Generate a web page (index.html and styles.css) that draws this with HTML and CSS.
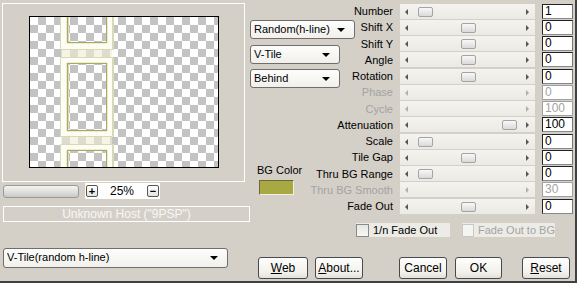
FILE: index.html
```html
<!DOCTYPE html>
<html lang="en">
<head>
    <meta charset="UTF-8">
    <title>V-Tile</title>
    <link rel="stylesheet" href="styles.css">
</head>
<body>
<div class="dialog">
    <!-- Preview side -->
    <div class="left">
        <div class="preview">
            <div class="canvas">
                <svg width="188" height="150" viewBox="0 0 188 150">
                    <g fill="#fdfdf3" fill-rule="evenodd" stroke="#d9d9b8">
                        <path d="M30.5 -10H82.5V32.5H30.5Z M37 -10H77V26H37Z"/>
                        <path d="M30.5 40.5H82.5V119.5H30.5Z M37 46H77V114H37Z"/>
                        <path d="M30.5 127.5H82.5V160H30.5Z M37 133H77V160H37Z"/>
                    </g>
                    <rect x="31" y="33" width="51" height="7" fill="#efefd6" opacity=".6"/>
                    <rect x="31" y="120" width="51" height="7" fill="#efefd6" opacity=".6"/>
                    <g fill="none" stroke="#a9a962">
                        <path d="M37.5 -10V25.5H76.5V-10"/>
                        <rect x="37.5" y="46.5" width="39" height="67"/>
                        <path d="M37.5 160V133.5H76.5V160"/>
                    </g>
                    <g fill="none" stroke="#dcdcb0">
                        <path d="M38.5 -10V24.5"/>
                        <path d="M38.5 47.5V112.5"/>
                        <path d="M38.5 134.5V160"/>
                        <path d="M83.5 -10V33 M83.5 40V120 M83.5 127V160"/>
                    </g>
                </svg>
            </div>
        </div>
        <div class="zoom-row">
            <div class="zoom-bar"></div>
            <div class="zoom-box">
                <span class="mini-btn">+</span>
                <span class="zoom-val">25%</span>
                <span class="mini-btn">&minus;</span>
            </div>
        </div>
        <div class="host">Unknown Host ("9PSP")</div>
        <div class="combo combo-filter">V-Tile(random h-line)<span class="caret"></span></div>
    </div>

    <!-- Settings side -->
    <div class="right">
        <div class="controls">
            <div class="mid">
                <div class="combo combo-mode">Random(h-line)<span class="caret"></span></div>
                <div class="combo combo-tile">V-Tile<span class="caret"></span></div>
                <div class="combo combo-order">Behind<span class="caret"></span></div>
                <div class="bg-label">BG Color</div>
                <div class="swatch"></div>
            </div>
            <div class="sliders">
                <span class="label">Number</span>
                <div class="track"><i class="arr-l"></i><b class="thumb pos-min"></b><i class="arr-r"></i></div>
                <span class="edit">1</span>

                <span class="label">Shift X</span>
                <div class="track"><i class="arr-l"></i><b class="thumb pos-mid"></b><i class="arr-r"></i></div>
                <span class="edit">0</span>

                <span class="label">Shift Y</span>
                <div class="track"><i class="arr-l"></i><b class="thumb pos-mid"></b><i class="arr-r"></i></div>
                <span class="edit">0</span>

                <span class="label">Angle</span>
                <div class="track"><i class="arr-l"></i><b class="thumb pos-mid"></b><i class="arr-r"></i></div>
                <span class="edit">0</span>

                <span class="label">Rotation</span>
                <div class="track"><i class="arr-l"></i><b class="thumb pos-mid"></b><i class="arr-r"></i></div>
                <span class="edit">0</span>

                <span class="label off">Phase</span>
                <div class="track off"><i class="arr-l"></i><i class="arr-r"></i></div>
                <span class="edit off">0</span>

                <span class="label off">Cycle</span>
                <div class="track off"><i class="arr-l"></i><i class="arr-r"></i></div>
                <span class="edit off">100</span>

                <span class="label">Attenuation</span>
                <div class="track"><i class="arr-l"></i><b class="thumb pos-max"></b><i class="arr-r"></i></div>
                <span class="edit">100</span>

                <span class="label">Scale</span>
                <div class="track"><i class="arr-l"></i><b class="thumb pos-min"></b><i class="arr-r"></i></div>
                <span class="edit">0</span>

                <span class="label">Tile Gap</span>
                <div class="track"><i class="arr-l"></i><b class="thumb pos-mid"></b><i class="arr-r"></i></div>
                <span class="edit">0</span>

                <span class="label">Thru BG Range</span>
                <div class="track"><i class="arr-l"></i><b class="thumb pos-min"></b><i class="arr-r"></i></div>
                <span class="edit">0</span>

                <span class="label off">Thru BG Smooth</span>
                <div class="track off"><i class="arr-l"></i><i class="arr-r"></i></div>
                <span class="edit off">30</span>

                <span class="label">Fade Out</span>
                <div class="track"><i class="arr-l"></i><b class="thumb pos-mid"></b><i class="arr-r"></i></div>
                <span class="edit">0</span>
            </div>
        </div>

        <div class="checks">
            <label class="check"><span class="box"></span>1/n Fade Out</label>
            <label class="check off"><span class="box"></span>Fade Out to BG</label>
        </div>

        <div class="buttons">
            <button class="btn btn-web"><u>W</u>eb</button>
            <button class="btn btn-about"><u>A</u>bout...</button>
            <button class="btn btn-cancel">Cancel</button>
            <button class="btn btn-ok">OK</button>
            <button class="btn btn-reset"><u>R</u>eset</button>
        </div>
    </div>
</div>
</body>
</html>
```

FILE: styles.css
```css
body {
    margin: 0;
    font-family: "Liberation Sans", Arial, sans-serif;
    font-size: 11px;
    color: #000;
    background-color: #d4d0c8;
}
.dialog {
    width: 577px;
    height: 283px;
    box-sizing: border-box;
    display: flex;
    background-color: #d4d0c8;
    border-right: 2px solid #404040;
    border-bottom: 2px solid #404040;
    overflow: hidden;
}

/* left side */
.left {
    width: 250px;
    flex-shrink: 0;
    display: flex;
    flex-direction: column;
}
.preview {
    margin: 3px 0 0 2px;
    width: 243px;
    height: 179px;
    box-sizing: border-box;
    border: 1px solid #fff;
    padding: 12px 0 0 26px;
}
.canvas {
    width: 188px;
    height: 150px;
    border: 1px solid #000;
    background-color: #fff;
    background-image: conic-gradient(#c3c3c3 25%, #fff 0 50%, #c3c3c3 0 75%, #fff 0);
    background-size: 16px 16px;
}
.canvas svg {
    display: block;
}
.zoom-row {
    display: flex;
    align-items: center;
    margin-top: 1px;
    height: 16px;
}
.zoom-bar {
    margin-left: 3px;
    width: 76px;
    height: 13px;
    box-sizing: border-box;
    border: 1px solid #9a9a9a;
    border-radius: 3px;
    background: linear-gradient(#f4f4f2, #dcdcd8 60%, #c8c8c4);
}
.zoom-box {
    margin-left: 6px;
    width: 75px;
    height: 16px;
    background-color: #fff;
    display: flex;
    align-items: center;
}
.mini-btn {
    width: 12px;
    height: 12px;
    box-sizing: border-box;
    margin-left: 1px;
    border: 1px solid #555;
    border-radius: 2px;
    background: linear-gradient(#fff, #e4e3de);
    font-size: 11px;
    font-weight: bold;
    line-height: 10px;
    text-align: center;
}
.zoom-val {
    width: 48px;
    text-align: center;
    font-size: 12px;
}
.host {
    margin: 7px 0 0 3px;
    width: 247px;
    height: 16px;
    box-sizing: border-box;
    border: 1px solid #fff;
    color: #f7f7f5;
    font-size: 12px;
    line-height: 14px;
    text-align: center;
}

/* combo boxes */
.combo {
    position: relative;
    height: 19px;
    box-sizing: border-box;
    border: 1px solid #6e6e6e;
    border-radius: 3px;
    background: linear-gradient(#fdfdfc, #f1f0eb);
    padding-left: 3px;
    line-height: 17px;
    font-size: 11px;
}
.caret {
    position: absolute;
    right: 9px;
    top: 7px;
    border-top: 4px solid #000;
    border-left: 4px solid transparent;
    border-right: 4px solid transparent;
}
.combo-filter {
    margin: 26px 0 0 3px;
    width: 225px;
    height: 20px;
}
.combo-mode {
    margin-top: 20px;
    width: 105px;
}
.combo-tile {
    margin-top: 6px;
    width: 90px;
}
.combo-order {
    margin-top: 5px;
    width: 90px;
}

/* right side */
.right {
    flex: 1;
    display: flex;
    flex-direction: column;
}
.controls {
    display: flex;
    height: 214px;
}
.mid {
    width: 105px;
    flex-shrink: 0;
    display: flex;
    flex-direction: column;
}
.bg-label {
    margin: 76px 0 0 7px;
    font-size: 11px;
    height: 14px;
}
.swatch {
    margin: 2px 0 0 9px;
    width: 35px;
    height: 15px;
    box-sizing: border-box;
    background-color: #a9a943;
    border: 1px solid;
    border-color: #6a6a3a #f0f0e0 #f0f0e0 #6a6a3a;
}
.sliders {
    padding-top: 3px;
    display: grid;
    grid-template-columns: 38px 135px 31px;
    grid-auto-rows: 16.25px;
    column-gap: 7px;
    align-items: center;
}
.label {
    justify-self: end;
    white-space: nowrap;
    font-size: 11px;
}
.label.off {
    color: #a3a3a3;
}
.track {
    position: relative;
    height: 15px;
    background: linear-gradient(#f4f3ef, #ebeae4);
}
.arr-l, .arr-r {
    position: absolute;
    top: 5px;
    border-top: 3px solid transparent;
    border-bottom: 3px solid transparent;
}
.arr-l {
    left: 5px;
    border-right: 3px solid #555;
}
.arr-r {
    left: 126px;
    border-left: 3px solid #555;
}
.track.off .arr-l {
    border-right-color: #b0b0b0;
}
.track.off .arr-r {
    border-left-color: #b0b0b0;
}
.thumb {
    position: absolute;
    top: 3px;
    width: 15px;
    height: 10px;
    box-sizing: border-box;
    border: 1px solid #a4a4a4;
    border-radius: 2px;
    background: linear-gradient(#f8f8f8, #dadada);
}
.pos-min { left: 18px; }
.pos-mid { left: 61px; }
.pos-max { left: 102px; }
.edit {
    height: 15px;
    box-sizing: border-box;
    border: 1px solid;
    border-color: #222 #777 #888 #222;
    background-color: #fff;
    padding-left: 2px;
    font-size: 12px;
    line-height: 13px;
}
.edit.off {
    border-color: #a0a0a0;
    color: #a3a3a3;
}

/* checkboxes */
.checks {
    display: flex;
    gap: 12px;
    margin: 9px 0 0 106px;
}
.check {
    display: flex;
    align-items: center;
    gap: 4px;
    height: 14px;
    width: 94px;
    background-color: #ecebe6;
    font-size: 11px;
    white-space: nowrap;
}
.check.off {
    width: 93px;
    color: #a3a3a3;
}
.box {
    width: 13px;
    height: 13px;
    box-sizing: border-box;
    border: 1px solid #8a8a8a;
    background: linear-gradient(#e6e6e2, #f8f8f6);
}
.check.off .box {
    border-color: #c8c8c4;
    background: #f4f4f2;
}

/* buttons */
.buttons {
    display: flex;
    margin-top: 20px;
}
.btn {
    height: 22px;
    padding: 0;
    border: 1px solid #4a4a4a;
    border-radius: 3px;
    background: linear-gradient(#fefefe, #f2f1ec 70%, #e2e1dc);
    font-family: "Liberation Sans", Arial, sans-serif;
    font-size: 12px;
    color: #000;
}
.btn-web { margin-left: 8px; width: 50px; }
.btn-about { margin-left: 7px; width: 48px; }
.btn-cancel { margin-left: 36px; width: 48px; }
.btn-ok { margin-left: 8px; width: 47px; }
.btn-reset { margin-left: 20px; width: 48px; }
```
